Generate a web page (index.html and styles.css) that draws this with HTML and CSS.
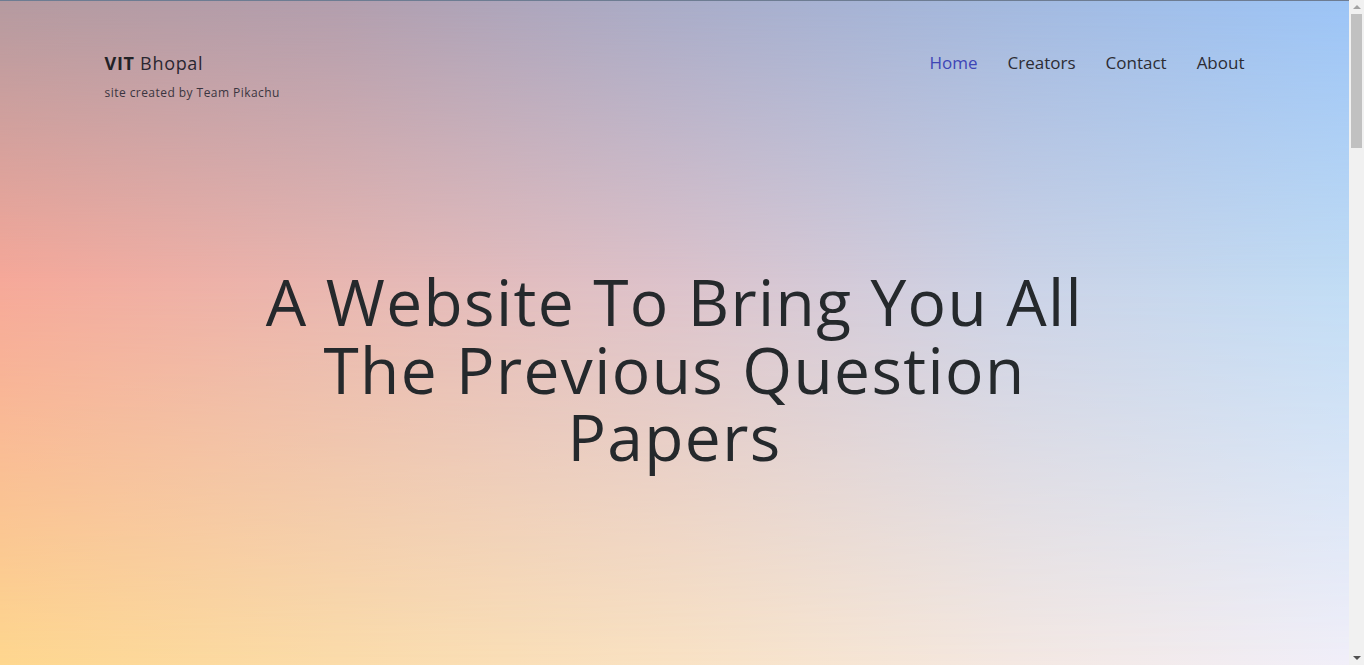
FILE: index.html
```html
<!DOCTYPE html>
<html lang="en">
<head>
<meta charset="utf-8">
<title>VIT Bhopal - Previous Question Papers</title>
<link rel="stylesheet" href="styles.css">
</head>
<body>
<section class="hero" id="home">
  <header class="site-header container">
    <div class="brand-block">
      <a class="brand" href="#home"><strong>VIT</strong> Bhopal</a>
      <p class="tagline">site created by Team Pikachu</p>
    </div>
    <nav class="main-nav">
      <a class="nav-link active" href="#home">Home</a>
      <a class="nav-link" href="#creators">Creators</a>
      <a class="nav-link" href="#contact">Contact</a>
      <a class="nav-link" href="#about">About</a>
    </nav>
  </header>
  <div class="hero-body container">
    <h1 class="hero-title">A Website To Bring You All<br>The Previous Question<br>Papers</h1>
  </div>
</section>
<section class="page-section" id="creators"></section>
<section class="page-section" id="contact"></section>
<section class="page-section" id="about"></section>
<div class="scrollbar" aria-hidden="true">
  <span class="scroll-btn up"></span>
  <span class="scroll-track"><span class="scroll-thumb"></span></span>
  <span class="scroll-btn down"></span>
</div>
</body>
</html>
```
FILE: styles.css
```css
* { box-sizing: border-box; }

html, body {
  margin: 0;
  padding: 0;
}

body {
  padding-right: 15px;
  font-family: "Open Sans", "Liberation Sans", sans-serif;
  color: #26292d;
  background: #f7f3f1;
}

.container {
  width: 1170px;
  margin: 0 auto;
  padding: 0 15px;
}

.hero {
  position: relative;
  height: 665px;
  border-top: 1px solid #6d7c92;
  overflow: hidden;
  background: linear-gradient(to right, #fed78f 0%, #fbdcaa 25%, #f9e2c4 50%, #f4e8e2 75%, #f1eff9 100%);
}

.hero::before,
.hero::after {
  content: "";
  position: absolute;
  inset: 0;
  pointer-events: none;
}

/* middle band */
.hero::before {
  background: linear-gradient(to right, #f6a899 0%, #e8b6b1 25%, #dcc2cb 50%, #cbd2e6 75%, #c0dcf5 100%);
  -webkit-mask-image: linear-gradient(to bottom, #000 0%, #000 42%, transparent 100%);
  mask-image: linear-gradient(to bottom, #000 0%, #000 42%, transparent 100%);
}

/* top band */
.hero::after {
  background: linear-gradient(to right, #b49aa0 0%, #b29ead 25%, #a9acc8 50%, #a3b9df 75%, #9cc4f6 100%);
  -webkit-mask-image: linear-gradient(to bottom, #000 0%, transparent 42%);
  mask-image: linear-gradient(to bottom, #000 0%, transparent 42%);
}

.site-header,
.hero-body {
  position: relative;
  z-index: 1;
}

.site-header {
  display: flex;
  justify-content: space-between;
  align-items: flex-start;
  padding-top: 50px;
}

.brand-block {
  display: flex;
  flex-direction: column;
}

.brand {
  font-size: 18px;
  line-height: 24px;
  color: #2a2630;
  text-decoration: none;
  letter-spacing: 0.7px;
}

.brand strong {
  font-weight: 700;
  color: #222226;
}

.tagline {
  margin: 9px 0 0;
  font-size: 12px;
  line-height: 18px;
  letter-spacing: 0.45px;
  color: #3a3540;
}

.main-nav {
  display: flex;
  gap: 30px;
}

.nav-link {
  font-size: 17px;
  line-height: 24px;
  color: #2c2c34;
  text-decoration: none;
}

.nav-link.active {
  color: #3d45b6;
}

.hero-body {
  padding-top: 166px;
  text-align: center;
}

.hero-title {
  margin: 0;
  font-size: 64px;
  line-height: 67.5px;
  font-weight: 400;
  letter-spacing: 1.4px;
  color: #25292c;
}

.page-section {
  min-height: 828px;
}

/* window scrollbar, as shown in the reference capture */
.scrollbar {
  position: fixed;
  top: 0;
  right: 0;
  width: 15px;
  height: 100vh;
  display: flex;
  flex-direction: column;
  background: #f1f1f1;
  z-index: 10;
}

.scroll-btn {
  display: flex;
  justify-content: center;
  height: 14px;
  flex: none;
}

.scroll-btn::before {
  content: "";
  width: 0;
  height: 0;
  margin-top: 5px;
  border-left: 4px solid transparent;
  border-right: 4px solid transparent;
}

.scroll-btn.up::before {
  border-bottom: 4px solid #a3a3a3;
}

.scroll-btn.down::before {
  border-top: 4px solid #505050;
}

.scroll-track {
  flex: 1;
  display: flex;
  flex-direction: column;
  padding: 0 2px;
}

.scroll-thumb {
  height: 134px;
  background: #c1c1c1;
}
```
